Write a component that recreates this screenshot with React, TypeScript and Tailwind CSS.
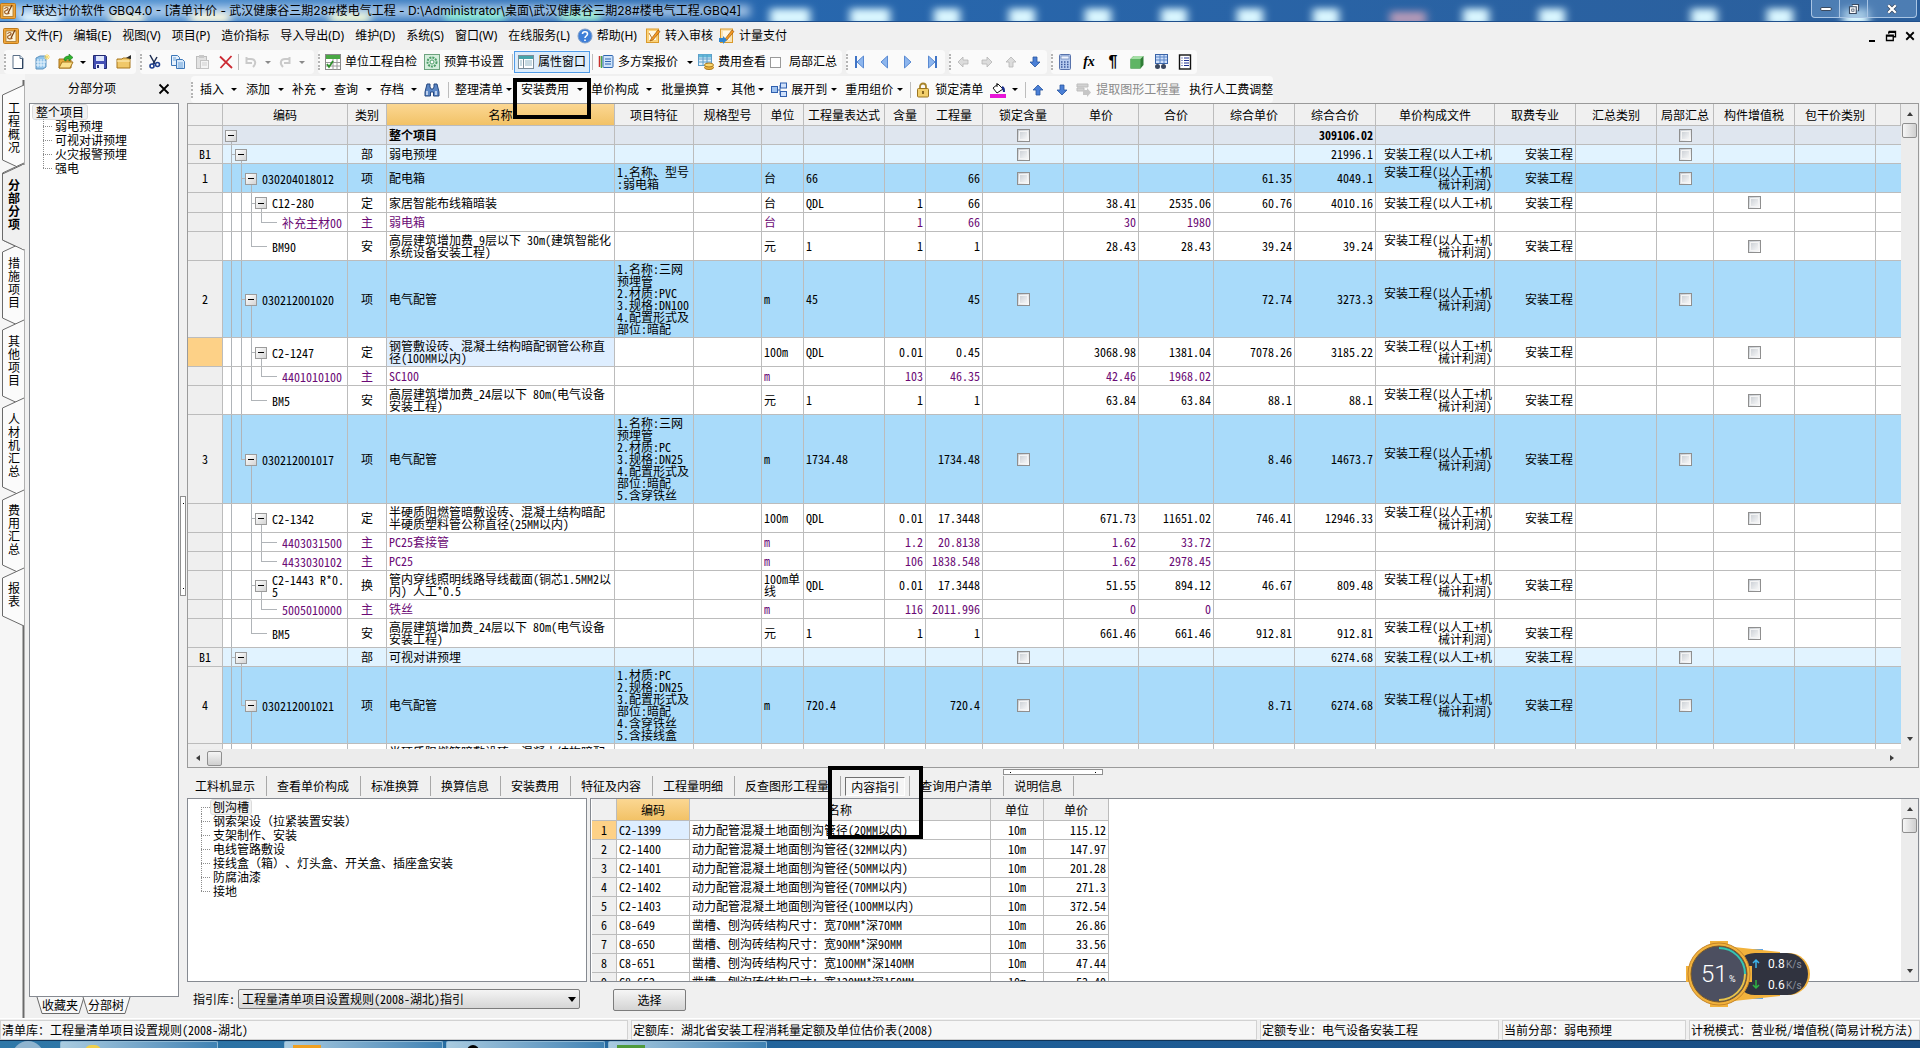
import { type ReactNode } from 'react';
import { clsx } from 'clsx';

type Kind = 'root' | 'part' | 'item' | 'norm' | 'child' | 'fee';
type Slot = 'v' | 'tee' | 'corner' | 'branch' | 'end' | 'box' | 'none';

interface BillRow {
  kind: Kind;
  height: string;
  no?: string;
  slots: Slot[];
  code?: string;
  type?: string;
  name: string;
  feature?: string;
  unit?: string;
  expr?: string;
  content?: string;
  qty?: string;
  price?: string;
  total?: string;
  unitCost?: string;
  cost?: string;
  short?: boolean;
  current?: boolean;
}

const H19 = 'h-[19px]';
const H20 = 'h-[20px]';
const H29 = 'h-[29px]';
const H77 = 'h-[77px]';
const H89 = 'h-[89px]';

const rows: BillRow[] = [
  { kind: 'root', height: H19, slots: ['box'], name: '整个项目', cost: '309106.02' },
  { kind: 'part', height: H19, no: 'B1', slots: ['tee', 'box'], type: '部', name: '弱电预埋', cost: '21996.1', short: true },
  { kind: 'item', height: H29, no: '1', slots: ['v', 'tee', 'box'], code: '030204018012', type: '项', name: '配电箱', feature: '1.名称、型号\n:弱电箱', unit: '台', expr: '66', qty: '66', unitCost: '61.35', cost: '4049.1' },
  { kind: 'norm', height: H20, slots: ['v', 'v', 'tee', 'box'], code: 'C12-280', type: '定', name: '家居智能布线箱暗装', unit: '台', expr: 'QDL', content: '1', qty: '66', price: '38.41', total: '2535.06', unitCost: '60.76', cost: '4010.16', short: true },
  { kind: 'child', height: H19, slots: ['v', 'v', 'v', 'end'], code: '补充主材00', type: '主', name: '弱电箱', unit: '台', content: '1', qty: '66', price: '30', total: '1980' },
  { kind: 'fee', height: H29, slots: ['v', 'v', 'end'], code: 'BM90', type: '安', name: '高层建筑增加费_9层以下 30m(建筑智能化\n系统设备安装工程)', unit: '元', expr: '1', content: '1', qty: '1', price: '28.43', total: '28.43', unitCost: '39.24', cost: '39.24' },
  { kind: 'item', height: H77, no: '2', slots: ['v', 'tee', 'box'], code: '030212001020', type: '项', name: '电气配管', feature: '1.名称:三网\n预埋管\n2.材质:PVC\n3.规格:DN100\n4.配置形式及\n部位:暗配', unit: 'm', expr: '45', qty: '45', unitCost: '72.74', cost: '3273.3' },
  { kind: 'norm', height: H29, slots: ['v', 'v', 'tee', 'box'], code: 'C2-1247', type: '定', name: '钢管敷设砖、混凝土结构暗配钢管公称直\n径(100MM以内)', unit: '100m', expr: 'QDL', content: '0.01', qty: '0.45', price: '3068.98', total: '1381.04', unitCost: '7078.26', cost: '3185.22', current: true },
  { kind: 'child', height: H19, slots: ['v', 'v', 'v', 'end'], code: '4401010100', type: '主', name: 'SC100', unit: 'm', content: '103', qty: '46.35', price: '42.46', total: '1968.02' },
  { kind: 'fee', height: H29, slots: ['v', 'v', 'end'], code: 'BM5', type: '安', name: '高层建筑增加费_24层以下 80m(电气设备\n安装工程)', unit: '元', expr: '1', content: '1', qty: '1', price: '63.84', total: '63.84', unitCost: '88.1', cost: '88.1' },
  { kind: 'item', height: H89, no: '3', slots: ['v', 'corner', 'box'], code: '030212001017', type: '项', name: '电气配管', feature: '1.名称:三网\n预埋管\n2.材质:PC\n3.规格:DN25\n4.配置形式及\n部位:暗配\n5.含穿铁丝', unit: 'm', expr: '1734.48', qty: '1734.48', unitCost: '8.46', cost: '14673.7' },
  { kind: 'norm', height: H29, slots: ['v', 'none', 'tee', 'box'], code: 'C2-1342', type: '定', name: '半硬质阻燃管暗敷设砖、混凝土结构暗配\n半硬质塑料管公称直径(25MM以内)', unit: '100m', expr: 'QDL', content: '0.01', qty: '17.3448', price: '671.73', total: '11651.02', unitCost: '746.41', cost: '12946.33' },
  { kind: 'child', height: H19, slots: ['v', 'none', 'v', 'branch'], code: '4403031500', type: '主', name: 'PC25套接管', unit: 'm', content: '1.2', qty: '20.8138', price: '1.62', total: '33.72' },
  { kind: 'child', height: H19, slots: ['v', 'none', 'v', 'end'], code: '4433030102', type: '主', name: 'PC25', unit: 'm', content: '106', qty: '1838.548', price: '1.62', total: '2978.45' },
  { kind: 'norm', height: H29, slots: ['v', 'none', 'tee', 'box'], code: 'C2-1443 R*0.\n5', type: '换', name: '管内穿线照明线路导线截面(铜芯1.5MM2以\n内) 人工*0.5', unit: '100m单\n线', expr: 'QDL', content: '0.01', qty: '17.3448', price: '51.55', total: '894.12', unitCost: '46.67', cost: '809.48' },
  { kind: 'child', height: H19, slots: ['v', 'none', 'v', 'end'], code: '5005010000', type: '主', name: '铁丝', unit: 'm', content: '116', qty: '2011.996', price: '0', total: '0' },
  { kind: 'fee', height: H29, slots: ['v', 'none', 'end'], code: 'BM5', type: '安', name: '高层建筑增加费_24层以下 80m(电气设备\n安装工程)', unit: '元', expr: '1', content: '1', qty: '1', price: '661.46', total: '661.46', unitCost: '912.81', cost: '912.81' },
  { kind: 'part', height: H19, no: 'B1', slots: ['tee', 'box'], type: '部', name: '可视对讲预埋', cost: '6274.68', short: true },
  { kind: 'item', height: H77, no: '4', slots: ['v', 'corner', 'box'], code: '030212001021', type: '项', name: '电气配管', feature: '1.材质:PC\n2.规格:DN25\n3.配置形式及\n部位:暗配\n4.含穿铁丝\n5.含接线盒', unit: 'm', expr: '720.4', qty: '720.4', unitCost: '8.71', cost: '6274.68' },
  { kind: 'norm', height: H29, slots: ['v', 'none', 'v'], name: '半硬质阻燃管暗敷设砖、混凝土结构暗配\n半硬质塑料管公称直径(25MM以内)' },
];

const rowColors: Record<Kind, string> = {
  root: 'bg-[#dfe6ef] font-bold',
  part: 'bg-[#e1f3ff]',
  item: 'bg-[#a9dbfa]',
  norm: 'bg-white',
  child: 'bg-white text-[#6b0a75]',
  fee: 'bg-white',
};

const columns = [
  { title: '', width: 'w-[35px]' },
  { title: '编码', width: 'w-[125px]' },
  { title: '类别', width: 'w-[39px]' },
  { title: '名称', width: 'w-[228px]' },
  { title: '项目特征', width: 'w-[79px]' },
  { title: '规格型号', width: 'w-[68px]' },
  { title: '单位', width: 'w-[42px]' },
  { title: '工程量表达式', width: 'w-[81px]' },
  { title: '含量', width: 'w-[41px]' },
  { title: '工程量', width: 'w-[57px]' },
  { title: '锁定含量', width: 'w-[81px]' },
  { title: '单价', width: 'w-[75px]' },
  { title: '合价', width: 'w-[75px]' },
  { title: '综合单价', width: 'w-[81px]' },
  { title: '综合合价', width: 'w-[81px]' },
  { title: '单价构成文件', width: 'w-[119px]' },
  { title: '取费专业', width: 'w-[81px]' },
  { title: '汇总类别', width: 'w-[81px]' },
  { title: '局部汇总', width: 'w-[57px]' },
  { title: '构件增值税', width: 'w-[81px]' },
  { title: '包干价类别', width: 'w-[81px]' },
  { title: '', width: '' },
];

const guideRows = [
  ['C2-1399', '动力配管混凝土地面刨沟管径(20MM以内)', '115.12'],
  ['C2-1400', '动力配管混凝土地面刨沟管径(32MM以内)', '147.97'],
  ['C2-1401', '动力配管混凝土地面刨沟管径(50MM以内)', '201.28'],
  ['C2-1402', '动力配管混凝土地面刨沟管径(70MM以内)', '271.3'],
  ['C2-1403', '动力配管混凝土地面刨沟管径(100MM以内)', '372.54'],
  ['C8-649', '凿槽、刨沟砖结构尺寸：宽70MM*深70MM', '26.86'],
  ['C8-650', '凿槽、刨沟砖结构尺寸：宽90MM*深90MM', '33.56'],
  ['C8-651', '凿槽、刨沟砖结构尺寸：宽100MM*深140MM', '47.44'],
  ['C8-652', '凿槽、刨沟砖结构尺寸：宽120MM*深150MM', '53.40'],
];

const sideTabs = [
  { label: '工程概况', top: 85, bottom: 170, text: 102 },
  { label: '分部分项', top: 163, bottom: 250, text: 179 },
  { label: '措施项目', top: 242, bottom: 328, text: 257 },
  { label: '其他项目', top: 320, bottom: 406, text: 335 },
  { label: '人材机汇总', top: 398, bottom: 497, text: 413 },
  { label: '费用汇总', top: 490, bottom: 575, text: 504 },
  { label: '报表', top: 568, bottom: 626, text: 582 },
];

const mono = "font-['Noto_Sans_Mono_CJK_SC','Noto_Sans_CJK_SC',monospace]";

/* ---------- icons ---------- */

function Svg({ children, size = 'size-4' }: { children: ReactNode; size?: string }) {
  return (
    <svg viewBox="0 0 16 16" className={clsx(size, 'shrink-0')} fill="none" aria-hidden="true">
      {children}
    </svg>
  );
}

const AppIcon = () => (
  <Svg>
    <rect x="0.5" y="0.5" width="15" height="15" rx="1" fill="#f0a63a" stroke="#c07a18" />
    <rect x="3" y="3" width="10" height="10.5" fill="#fdf3d8" stroke="#a5762c" strokeWidth="0.8" />
    <path d="M4.500 6c1-2 4-2 3.500 0s-3.500 1-3.500 3 3 2.500 5 1" stroke="#a0622a" strokeWidth="1.2" />
    <path d="M8 10l4-8" stroke="#7a3d0c" strokeWidth="1.2" />
  </Svg>
);
const NewIcon = () => (
  <Svg>
    <path d="M3 1.500h7l3 3v10H3z" fill="#fff" stroke="#5b7088" />
    <path d="M10 1.500v3h3" stroke="#5b7088" fill="#dfe9f5" />
    <path d="M12.500 5v9.500H4" stroke="#2f4460" />
  </Svg>
);
const ProjectIcon = () => (
  <Svg>
    <path d="M2 4l4-2h6v11l-3 2H2z" fill="#8fc3ea" stroke="#5e93bf" />
    <path d="M4 5v8M7 5v8M10 5v8M2 8h10M2 11h9" stroke="#e8f4fd" />
    <path d="M13 0v6M10 3h6M11 1l4 4M15 1l-4 4" stroke="#f9dc6e" />
  </Svg>
);
const OpenIcon = () => (
  <Svg>
    <path d="M1 5h5l1 1h6v8H1z" fill="#e7a93a" stroke="#a8761d" />
    <path d="M1 14l3-6h11l-3 6z" fill="#fbe08b" stroke="#a8761d" />
    <path d="M6 6c0-3 2-4 5-4V0l4 3.500-4 3.500V5C9 5 8 5 8 7z" fill="#2fb32f" stroke="#17751b" strokeWidth="0.6" />
  </Svg>
);
const SaveIcon = () => (
  <Svg>
    <path d="M1.500 1.500h12l1 1v12h-13z" fill="#4450b4" stroke="#22296f" />
    <rect x="4" y="2" width="8" height="5" fill="#dfe6fb" />
    <rect x="4" y="10" width="8" height="5" fill="#eef1fd" />
    <rect x="5" y="11" width="2" height="3" fill="#22296f" />
  </Svg>
);
const FolderIcon = () => (
  <Svg>
    <path d="M1 5h5l1-1h7v10H1z" fill="#f0c869" stroke="#a8761d" />
    <path d="M1 7h13" stroke="#fff2c4" />
    <path d="M10 4l5-3v4z" fill="#2c2c2c" />
  </Svg>
);
const CutIcon = () => (
  <Svg>
    <path d="M4 1l5 9M11 3L7 10" stroke="#1d2d52" strokeWidth="1.500" />
    <circle cx="6" cy="12" r="2" stroke="#1f3f8f" strokeWidth="1.600" />
    <circle cx="11.500" cy="10.500" r="2" stroke="#1f3f8f" strokeWidth="1.600" />
  </Svg>
);
const CopyIcon = () => (
  <Svg>
    <path d="M1.500 1.500h6l2 2v8h-8z" fill="#e6f1fc" stroke="#3e78b8" />
    <path d="M6.500 5.500h6l2 2v7h-8z" fill="#d4e7fa" stroke="#3e78b8" />
    <path d="M8 9h5M8 11h5M8 13h5M3 4h3M3 6h3" stroke="#6fa3d8" />
  </Svg>
);
const PasteIcon = () => (
  <Svg>
    <rect x="2.500" y="2.500" width="10" height="12" fill="#e2e2e2" stroke="#bdbdbd" />
    <rect x="5" y="1" width="5" height="3" fill="#c9c9c9" />
    <rect x="6.500" y="6.500" width="8" height="8" fill="#f4f4f4" stroke="#c4c4c4" />
    <path d="M8 9h5M8 11h5" stroke="#cfcfcf" />
  </Svg>
);
const DeleteIcon = () => (
  <Svg>
    <path d="M2 2.500l12 11.500M13.500 2L2.500 14" stroke="#cc2a33" strokeWidth="1.800" />
  </Svg>
);
const UndoIcon = ({ flip }: { flip?: boolean }) => (
  <Svg>
    <path
      d={flip ? 'M6 13C2 9 4 5 8 5h4M12.500 3v6H7' : 'M10 13c4-4 2-8-2-8H4M3.500 3v6H9'}
      stroke="#cacaca"
      strokeWidth="2"
    />
  </Svg>
);
const CheckListIcon = () => (
  <Svg>
    <rect x="0.500" y="0.500" width="15" height="15" fill="#fff" stroke="#8a8a8a" />
    <path d="M1 3h14" stroke="#4aa845" strokeWidth="4" />
    <path d="M1 8.500h14M1 12h14M8 5v11M12 5v11" stroke="#9a9a9a" />
    <path d="M2 10l2 3 4-6" stroke="#2c8f2a" strokeWidth="1.800" />
  </Svg>
);
const GearDocIcon = () => (
  <Svg>
    <rect x="0.500" y="0.500" width="15" height="15" fill="#d5eedd" stroke="#6da37e" />
    <circle cx="8" cy="8" r="4.500" stroke="#4d9e68" strokeWidth="2" strokeDasharray="2 1" />
    <circle cx="8" cy="8" r="2" fill="#fff" stroke="#4d9e68" />
  </Svg>
);
const WindowIcon = () => (
  <Svg>
    <rect x="0.500" y="1.500" width="15" height="13" fill="#fff" stroke="#7a8d99" />
    <path d="M1 3.500h14" stroke="#43a5ab" strokeWidth="3" />
    <path d="M5.500 5v9" stroke="#7a8d99" />
    <path d="M2 7h2M2 9h2M2 11h2M7 7h7M7 9h7M7 11h7" stroke="#8fb5c4" />
  </Svg>
);
const PlansIcon = () => (
  <Svg>
    <path d="M1.500 2v11" stroke="#c9302c" strokeWidth="1.500" />
    <path d="M3.500 2v12" stroke="#4aa845" strokeWidth="1.500" />
    <rect x="5" y="1.500" width="10" height="12" rx="1" fill="#cfe4fa" stroke="#2f66b1" />
    <path d="M7 5h6M7 7.500h6M7 10h6" stroke="#2f66b1" />
  </Svg>
);
const CostIcon = () => (
  <Svg>
    <rect x="0.500" y="0.500" width="13" height="11" fill="#dff0fb" stroke="#5d9cc8" />
    <path d="M1 2h12" stroke="#5fb8d8" strokeWidth="3" />
    <path d="M1 5h12M1 8h12M5 1v10M9 1v10" stroke="#5d9cc8" />
    <ellipse cx="11" cy="13.500" rx="4.500" ry="2" fill="#f0b63c" stroke="#a8761d" />
    <ellipse cx="11" cy="11" rx="4.500" ry="2" fill="#fbd76e" stroke="#a8761d" />
  </Svg>
);
const NavIcon = ({ dir, bar }: { dir: 'left' | 'right'; bar?: boolean }) => (
  <Svg>
    <g transform={dir === 'right' ? 'matrix(-1 0 0 1 16 0)' : undefined}>
      {bar && <path d="M4 2v12" stroke="#3f74c6" strokeWidth="2" />}
      <path d="M11.500 2v12L5 8z" fill="#8db6ee" stroke="#5a8ad2" />
    </g>
  </Svg>
);
const ArrowIcon = ({ rotate, color }: { rotate: number; color: string }) => (
  <Svg>
    <path
      d="M8 3l5 5h-3v5H6V8H3z"
      transform={`rotate(${rotate} 8 8)`}
      fill={color}
      stroke={color === '#4a7fd6' ? '#2a559f' : '#b5b5b5'}
      strokeWidth="0.800"
    />
  </Svg>
);
const CalcIcon = () => (
  <Svg>
    <rect x="2.500" y="0.500" width="11" height="15" rx="1" fill="#b9cdf0" stroke="#5873ac" />
    <rect x="4" y="2" width="8" height="3" fill="#eef4ff" stroke="#5873ac" strokeWidth="0.600" />
    <path d="M4 8h8M4 10.500h8M4 13h8" stroke="#3a579a" strokeWidth="1.500" strokeDasharray="1.500 1.500" />
  </Svg>
);
const CubeIcon = () => (
  <Svg>
    <path d="M1.500 5l3-3h10v9l-3 3.500h-10z" fill="#2f7d36" />
    <path d="M1.500 5h10v9.500h-10z" fill="#5fb565" />
    <path d="M1.500 5l3-3h10l-3 3z" fill="#a5dfa6" />
  </Svg>
);
const FindTableIcon = () => (
  <Svg>
    <rect x="2.500" y="0.500" width="12" height="9" fill="#cfe0fa" stroke="#3a64a8" />
    <path d="M3 3h11M3 6h11M7 1v8M11 1v8" stroke="#5b86c9" />
    <circle cx="4.500" cy="12.500" r="2.500" fill="#39465e" />
    <circle cx="10.500" cy="12.500" r="2.500" fill="#39465e" />
  </Svg>
);
const ListIcon = () => (
  <Svg>
    <rect x="2.500" y="1" width="11" height="14" fill="#fff" stroke="#111" strokeWidth="1.400" />
    <path d="M4.500 4h1M7 4h5M4.500 6.500h1M7 6.500h5M4.500 9h1M7 9h5M4.500 11.500h1M7 11.500h5" stroke="#1c2f8f" />
  </Svg>
);
const BinocularIcon = () => (
  <Svg>
    <path d="M3 2h3v3l1 2h2l1-2V2h3l2 8v4H9.500v-4h-3v4H1v-4z" fill="#5b86c4" stroke="#24467f" />
    <path d="M3 9v4M12 9v4" stroke="#dbe8fa" strokeWidth="1.500" />
  </Svg>
);
const ExpandIcon = () => (
  <Svg>
    <path d="M5 8h4M9 3v10" stroke="#3a64a8" />
    <rect x="0.500" y="4.500" width="6" height="6" fill="#9fc2f0" stroke="#2f5fae" />
    <rect x="9.500" y="1" width="6" height="5" fill="#cfe0fa" stroke="#2f5fae" />
    <rect x="9.500" y="9.500" width="6" height="5" fill="#cfe0fa" stroke="#2f5fae" />
  </Svg>
);
const LockIcon = () => (
  <Svg>
    <path d="M5 7V4.500a3 3 0 016 0V7" stroke="#a8842c" strokeWidth="1.800" />
    <rect x="2.500" y="6.500" width="11" height="8.500" rx="1" fill="#f2cf6b" stroke="#9a7420" />
    <path d="M8 9v3" stroke="#6b4d0d" strokeWidth="1.600" />
  </Svg>
);
const BucketIcon = () => (
  <Svg>
    <path d="M3 6l5-4 5 5-6 4z" fill="#fff" stroke="#111" />
    <path d="M7 5V1" stroke="#111" />
    <path d="M12 5c2 1 2 2 2 5" stroke="#1c2f8f" strokeWidth="2" />
    <rect x="0" y="12" width="16" height="4" fill="#e815d8" />
  </Svg>
);
const ExtractIcon = () => (
  <Svg>
    <path d="M1 2h11v3H1zM1 6h7v3H1z" fill="#d2d2d2" stroke="#bdbdbd" />
    <path d="M7 8h4V6l4 4.500-4 4.500v-2H7z" fill="#c6c6c6" />
  </Svg>
);
const HelpIcon = () => (
  <Svg>
    <circle cx="8" cy="8" r="7" fill="#3f7fd8" stroke="#7f9fc8" />
    <path d="M5.500 6c0-3 5-3 5 0 0 2-2.500 2-2.500 4M8 11.500V13" stroke="#fff" strokeWidth="1.600" />
  </Svg>
);
const AuditIcon = ({ arrow }: { arrow?: boolean }) => (
  <Svg>
    <rect x="1.500" y="1" width="12" height="13.500" fill={arrow ? '#fbe3b0' : '#fbd27a'} stroke="#d99a2c" />
    <rect x="4" y="3" width="7" height="9" fill="#fff8e4" />
    <path d="M6 11l7-9 2 1.500-7 8.500-3 1z" fill="#f59a22" stroke="#8a4a08" strokeWidth="0.600" />
    {arrow ? (
      <path d="M0 10h4V8l4 4-4 4v-2H0z" fill="#2f86d0" />
    ) : (
      <path d="M4 5l3 5" stroke="#c07a30" />
    )}
  </Svg>
);

/* ---------- toolbar parts ---------- */

const Grip = () => <span className="h-4 w-0 shrink-0 border-l-2 border-dotted border-[#b4b4b4]" />;
const Sep = () => <span className="h-4 w-px shrink-0 bg-[#bdbdbd]" />;

function IconButton({ label, children, className }: { label: string; children: ReactNode; className?: string }) {
  return (
    <button aria-label={label} className={clsx('flex w-6 shrink-0 justify-center', className)}>
      {children}
    </button>
  );
}

function Drop({ className = 'w-[10px]', muted }: { className?: string; muted?: boolean }) {
  return (
    <span className={clsx('flex shrink-0 justify-center', className)}>
      <span
        className={clsx(
          'border-x-[3px] border-t-[3px] border-x-transparent',
          muted ? 'border-t-[#8a8a8a]' : 'border-t-black'
        )}
      />
    </span>
  );
}

function DropButton({ label, drop = 'w-5', className }: { label: string; drop?: string; className?: string }) {
  return (
    <button className={clsx('flex shrink-0 items-center', className)}>
      {label}
      <Drop className={drop} />
    </button>
  );
}

function ToolGroup({ children, className }: { children: ReactNode; className?: string }) {
  return (
    <div className={clsx('flex h-full shrink-0 items-center rounded-sm bg-[#fafafa]', className)}>{children}</div>
  );
}

function TitleBar() {
  const blobs = [790, 870, 947, 1022, 1098, 1174, 1250, 1326, 1476, 1552, 1704, 1780, 1856];
  return (
    <header className="relative flex h-[22px] shrink-0 items-center overflow-hidden border-b border-[#1f4f8c] bg-linear-to-r from-[#5b9bd8] via-[#2767ae] via-40% to-[#2b5f9c]">
      <svg className="absolute inset-0 size-full" viewBox="0 0 1920 22" preserveAspectRatio="none" aria-hidden="true">
        <defs>
          <filter id="soft" x="-50%" y="-50%" width="200%" height="200%">
            <feGaussianBlur stdDeviation="4" />
          </filter>
        </defs>
        <g filter="url(#soft)">
          <rect x="10" y="5" width="740" height="13" fill="#c4dcf4" opacity="0.700" />
          <rect x="20" y="14" width="40" height="10" fill="#e4f6ff" />
          <rect x="110" y="14" width="34" height="10" fill="#f6f4dc" />
          <rect x="190" y="14" width="40" height="10" fill="#fffbe0" />
          <rect x="330" y="14" width="40" height="10" fill="#f4fbd8" />
          <rect x="445" y="12" width="60" height="10" fill="#8ff0d8" />
          <rect x="560" y="12" width="40" height="10" fill="#a6f4d6" />
          {blobs.map((x, i) => (
            <rect key={x} x={x - (i < 2 ? 20 : 13)} y="9" width={i < 2 ? 40 : 26} height="18" fill="#d9f6ff" />
          ))}
          <rect x="1390" y="12" width="36" height="14" fill="#b49ab8" />
        </g>
      </svg>
      <div className="relative flex flex-1 items-center gap-[5px] whitespace-nowrap">
        <AppIcon />
        <h1 className="font-['Inter','Noto_Sans_CJK_SC',sans-serif] text-xs">
          广联达计价软件 GBQ4.0 - [清单计价 - 武汉健康谷三期28#楼电气工程 - D:\Administrator\桌面\武汉健康谷三期28#楼电气工程.GBQ4]
        </h1>
      </div>
      <div className="relative mr-[3px] flex h-[18px] self-start rounded-b border border-t-0 border-[#a9c5e4] bg-[#6f9bc9]/50">
        <button aria-label="最小化" className="flex w-7 items-center justify-center border-r border-[#a9c5e4]">
          <span className="h-1 w-3 rounded-xs border border-[#3a4a60] bg-white" />
        </button>
        <button aria-label="还原" className="flex w-7 items-center justify-center border-r border-[#a9c5e4]">
          <Svg size="size-3">
            <path d="M5 2h9v9M2 5h9v9H2z" fill="#fff" stroke="#3a4a60" strokeWidth="1.500" />
            <rect x="5" y="8" width="3" height="3" fill="#fff" stroke="#3a4a60" />
          </Svg>
        </button>
        <button aria-label="关闭" className="flex w-12 items-center justify-center">
          <Svg size="size-3">
            <path d="M3 3l10 10M13 3L3 13" stroke="#3a4a60" strokeWidth="5" />
            <path d="M3 3l10 10M13 3L3 13" stroke="#fff" strokeWidth="3" />
          </Svg>
        </button>
      </div>
    </header>
  );
}

function MenuBar() {
  const menus = ['文件(F)', '编辑(E)', '视图(V)', '项目(P)', '造价指标', '导入导出(D)', '维护(D)', '系统(S)', '窗口(W)', '在线服务(L)'];
  return (
    <nav className="flex h-7 shrink-0 items-center pr-1 pl-[3px] whitespace-nowrap">
      <AppIcon />
      <div className="flex items-center gap-[11px] pl-[6px]">
        {menus.map((m) => (
          <button key={m}>{m}</button>
        ))}
      </div>
      <button className="flex items-center gap-1 pl-[7px]">
        <HelpIcon />
        帮助(H)
      </button>
      <button className="flex items-center gap-1 pl-2">
        <AuditIcon />
        转入审核
      </button>
      <button className="flex items-center gap-1 pl-[6px]">
        <AuditIcon arrow />
        计量支付
      </button>
      <div className="ml-auto flex items-center gap-[7px]">
        <button aria-label="最小化窗口" className="flex h-3 w-3 items-end justify-center">
          <span className="h-[2px] w-[6px] bg-black" />
        </button>
        <button aria-label="还原窗口">
          <Svg size="size-3">
            <path d="M5 2h9v7H11M5 2v3M5 3h9" stroke="#000" strokeWidth="1.800" />
            <path d="M2 7h9v7H2zM2 8h9" stroke="#000" strokeWidth="1.800" />
          </Svg>
        </button>
        <button aria-label="关闭窗口">
          <Svg size="size-3">
            <path d="M3 3l10 10M13 3L3 13" stroke="#000" strokeWidth="2.400" />
          </Svg>
        </button>
      </div>
    </nav>
  );
}

function MainToolbar() {
  return (
    <div className="flex h-6 shrink-0 items-center gap-1 pl-1 whitespace-nowrap">
      <ToolGroup className="w-[132px]">
        <Grip />
        <IconButton label="新建"><NewIcon /></IconButton>
        <IconButton label="新建项目"><ProjectIcon /></IconButton>
        <IconButton label="打开"><OpenIcon /></IconButton>
        <Drop />
        <IconButton label="保存"><SaveIcon /></IconButton>
        <IconButton label="关闭文件"><FolderIcon /></IconButton>
      </ToolGroup>
      <ToolGroup className="w-[174px]">
        <Grip />
        <IconButton label="剪切"><CutIcon /></IconButton>
        <IconButton label="复制"><CopyIcon /></IconButton>
        <IconButton label="粘贴"><PasteIcon /></IconButton>
        <IconButton label="删除"><DeleteIcon /></IconButton>
        <Sep />
        <IconButton label="撤销"><UndoIcon /></IconButton>
        <Drop muted />
        <IconButton label="恢复"><UndoIcon flip /></IconButton>
        <Drop muted />
      </ToolGroup>
      <ToolGroup className="w-[524px]">
        <Grip />
        <button className="flex items-center gap-1 pl-[5px]"><CheckListIcon />单位工程自检</button>
        <button className="flex items-center gap-1 pl-[7px]"><GearDocIcon />预算书设置</button>
        <span className="w-2" />
        <Sep />
        <button className="ml-px flex h-[22px] items-center gap-1 border border-[#4f9be8] bg-[#dcecfb] px-[3px]">
          <WindowIcon />属性窗口
        </button>
        <span className="w-[2px]" />
        <Sep />
        <button className="flex items-center gap-1 pl-[5px]"><PlansIcon />多方案报价<Drop className="w-4" /></button>
        <button className="flex items-center gap-1"><CostIcon />费用查看</button>
        <label className="flex items-center gap-2 pl-1">
          <input type="checkbox" className="size-[11px] appearance-none border border-[#9a9a9a] bg-white" />
          局部汇总
        </label>
      </ToolGroup>
      <ToolGroup className="w-[99px]">
        <Grip />
        <IconButton label="首条"><NavIcon dir="left" bar /></IconButton>
        <IconButton label="上一条"><NavIcon dir="left" /></IconButton>
        <IconButton label="下一条"><NavIcon dir="right" /></IconButton>
        <IconButton label="末条"><NavIcon dir="right" bar /></IconButton>
      </ToolGroup>
      <ToolGroup className="w-[98px]">
        <Grip />
        <IconButton label="左移"><ArrowIcon rotate={-90} color="#dcdcdc" /></IconButton>
        <IconButton label="右移"><ArrowIcon rotate={90} color="#dcdcdc" /></IconButton>
        <IconButton label="上移"><ArrowIcon rotate={0} color="#dcdcdc" /></IconButton>
        <IconButton label="下移"><ArrowIcon rotate={180} color="#4a7fd6" /></IconButton>
      </ToolGroup>
      <ToolGroup>
        <Grip />
        <IconButton label="计算器"><CalcIcon /></IconButton>
        <IconButton label="函数">
          <i className="font-['Liberation_Serif','Noto_Sans_CJK_SC',serif] text-sm leading-4 font-bold">fx</i>
        </IconButton>
        <IconButton label="段落">
          <span className="font-['Liberation_Sans','Noto_Sans_CJK_SC',sans-serif] text-base leading-4 font-bold">¶</span>
        </IconButton>
        <IconButton label="图块"><CubeIcon /></IconButton>
        <IconButton label="查找表"><FindTableIcon /></IconButton>
        <IconButton label="清单"><ListIcon /></IconButton>
      </ToolGroup>
    </div>
  );
}

function BillToolbar() {
  return (
    <div className="relative flex h-[29px] shrink-0 items-center pt-[2px] pl-1 whitespace-nowrap">
      <ToolGroup>
        <Grip />
        <DropButton label="插入" className="ml-[7px]" />
        <DropButton label="添加" drop="w-[22px]" className="ml-[2px]" />
        <DropButton label="补充" drop="w-[14px]" />
        <DropButton label="查询" drop="w-[22px]" className="ml-1" />
        <DropButton label="存档" drop="w-[20px]" />
        <IconButton label="查找" className="mx-[-4px]"><BinocularIcon /></IconButton>
        <span className="w-[8px]" />
        <Sep />
        <DropButton label="整理清单" drop="w-[12px]" className="ml-[6px]" />
        <DropButton label="安装费用" drop="w-[22px]" className="ml-[6px]" />
        <DropButton label="单价构成" drop="w-[20px]" />
        <DropButton label="批量换算" drop="w-[20px]" className="ml-[2px]" />
        <DropButton label="其他" drop="w-[12px]" className="ml-[2px]" />
        <button className="flex items-center gap-1 pl-1">
          <ExpandIcon />
          展开到
          <Drop className="w-[6px]" />
        </button>
        <DropButton label="重用组价" drop="w-[14px]" className="ml-2" />
        <span className="w-[3px]" />
        <Sep />
        <button className="flex items-center gap-1 pl-1">
          <LockIcon />
          锁定清单
        </button>
        <IconButton label="填充色" className="ml-[3px]"><BucketIcon /></IconButton>
        <Drop />
        <span className="w-[5px]" />
        <Sep />
        <IconButton label="上移行"><ArrowIcon rotate={0} color="#4a7fd6" /></IconButton>
        <IconButton label="下移行"><ArrowIcon rotate={180} color="#4a7fd6" /></IconButton>
        <button disabled className="flex items-center gap-1 pl-[2px] text-[#8a8a8a]">
          <ExtractIcon />
          提取图形工程量
        </button>
        <button className="pl-[9px]">执行人工费调整</button>
      </ToolGroup>
      <span className="pointer-events-none absolute top-1 left-[326px] z-10 h-[41px] w-[78px] border-4 border-black" />
    </div>
  );
}

/* ---------- side tabs ---------- */

function SideTabs() {
  return (
    <nav className="relative w-[25px] shrink-0 bg-[#f6f6f6]">
      <svg className="absolute inset-0 h-full w-[25px]" aria-hidden="true">
        <g transform="translate(0 -74)">
          <path d="M23.500 80V1018" stroke="#6a6a6a" strokeWidth="2" />
          {sideTabs.map((t) => (
            <path
              key={t.label}
              d={`M24 ${t.top}L2.500 ${t.top + 10}V${t.bottom - 10}L24 ${t.bottom}`}
              fill={t.label === '分部分项' ? '#f0f0f0' : '#fbfbfb'}
              stroke="#6a6a6a"
            />
          ))}
          <path d="M24 164L2.500 174V240L24 250" fill="#f0f0f0" stroke="#6a6a6a" />
          <path d="M23.500 165V249" stroke="#f0f0f0" strokeWidth="3" />
        </g>
      </svg>
      {sideTabs.map((t) => (
        <button
          key={t.label}
          style={{ top: t.text - 74 }}
          className={clsx('absolute left-2 w-3 text-xs leading-[13px]', t.label === '分部分项' && 'font-bold')}
        >
          {t.label}
        </button>
      ))}
    </nav>
  );
}

function DottedTree({ items, selected }: { items: string[]; selected?: number }) {
  return (
    <ul className="w-fit">
      {items.map((item, i) => (
        <li key={item} className="flex h-[14px] items-center whitespace-nowrap">
          <svg className="h-[14px] w-[10px] shrink-0" aria-hidden="true">
            <path
              d={`M0.500 ${i === 0 && selected === 0 ? 7 : 0}V${i === items.length - 1 ? 7 : 14}M0 7.500H9`}
              stroke="#8c8c8c"
              strokeDasharray="1 1"
            />
          </svg>
          <button
            className={clsx(
              'h-[14px] px-[2px] leading-[14px]',
              i === selected && 'rounded-xs bg-[#f1f1f1] outline-1 outline-[#dcdcdc]'
            )}
          >
            {item}
          </button>
        </li>
      ))}
    </ul>
  );
}

function PartPanel() {
  return (
    <aside className="ml-1 flex w-[150px] shrink-0 flex-col">
      <div className="flex h-[29px] items-center justify-center pl-[30px]">
        <h2>分部分项</h2>
        <button aria-label="关闭面板" className="ml-[42px]">
          <Svg size="size-3">
            <path d="M2 2l12 12M14 2L2 14" stroke="#000" strokeWidth="2.400" />
          </Svg>
        </button>
      </div>
      <div className={clsx('flex flex-1 flex-col items-start border border-[#868a91] bg-white pt-px pl-[3px]', mono)}>
        <button className="h-[14px] rounded-xs bg-[#f1f1f1] px-[3px] leading-[14px] outline-1 outline-[#dcdcdc]">
          整个项目
        </button>
        <div className="pl-[10px]">
          <DottedTree items={['弱电预埋', '可视对讲预埋', '火灾报警预埋', '强电']} />
        </div>
      </div>
      <div className="flex h-[21px] pl-2">
        {['收藏夹', '分部树'].map((t) => (
          <button key={t} className="relative h-[17px] w-[46px] leading-[17px]">
            <svg className="absolute inset-0 h-[17px] w-[50px] overflow-visible" aria-hidden="true">
              <path d="M0 0l5 16.500h37L47 0" stroke="#6a6a6a" fill="#f8f8f8" />
            </svg>
            <span className="relative">{t}</span>
          </button>
        ))}
      </div>
    </aside>
  );
}

/* ---------- bill grid ---------- */

function SlotMark({ slot }: { slot: Slot }) {
  const down = slot === 'v' || slot === 'tee' || slot === 'branch' || slot === 'box';
  const mark = (
    <span className="flex h-full w-[10px] flex-col items-center">
      <span className={clsx('w-px flex-1', slot !== 'box' && slot !== 'none' && 'bg-[#b0b4b8]')} />
      {slot === 'box' ? (
        <span className="flex size-3 shrink-0 items-center justify-center border border-[#9b9b9b] bg-linear-to-br from-white to-[#d4d4d4]">
          <span className="h-px w-[6px] bg-black" />
        </span>
      ) : (
        <span className="flex h-px w-[10px] shrink-0">
          <span className="w-[5px] shrink-0" />
          <span
            className={clsx(
              'h-px shrink-0',
              slot === 'v' && 'w-px bg-[#b0b4b8]',
              (slot === 'tee' || slot === 'corner') && 'w-[5px] bg-[#b0b4b8]',
              (slot === 'end' || slot === 'branch') && 'w-[16px] bg-[#b0b4b8]'
            )}
          />
        </span>
      )}
      <span className={clsx('w-px flex-1', down && 'bg-[#b0b4b8]')} />
    </span>
  );
  if (slot !== 'box') return mark;
  return (
    <button aria-label="折叠" className="h-full w-[10px]">
      {mark}
    </button>
  );
}

function GridCheck({ label }: { label: string }) {
  return (
    <input
      type="checkbox"
      aria-label={label}
      className="mx-auto block size-[13px] appearance-none border border-[#8f8f8f] bg-linear-to-br from-[#c4c9cf] to-white outline-1 -outline-offset-3 outline-[#f4f4f4]"
    />
  );
}

const cell = 'overflow-hidden border-r border-b border-[#bcbcbc] p-0';

function Cell({ children, className }: { children?: ReactNode; className?: string }) {
  return <td className={clsx(cell, 'px-[2px] whitespace-pre', className)}>{children}</td>;
}

function BillLine({ row }: { row: BillRow }) {
  const group = row.kind === 'root' || row.kind === 'part' || row.kind === 'item';
  const priced = row.type !== undefined && row.kind !== 'child';
  const leaf = row.kind === 'child' || row.kind === 'fee';
  const taxed = priced && !group;
  return (
    <tr className={clsx(row.height, rowColors[row.kind])}>
      <th className={clsx(cell, 'text-center font-normal', row.current ? 'bg-[#fdd187]' : 'bg-[#efefef]')}>{row.no}</th>
      <td className={cell}>
        <div className={clsx('-mb-px flex items-center pl-[3px]', row.height)}>
          {row.slots.map((s, i) => (
            <SlotMark key={i} slot={s} />
          ))}
          <span className={clsx('whitespace-pre', leaf ? 'pl-[16px]' : 'pl-[6px]')}>{row.code}</span>
        </div>
      </td>
      <Cell className="text-center">{row.type}</Cell>
      <Cell className={clsx(row.current && 'bg-[#deeeff]')}>{row.name}</Cell>
      <Cell>{row.feature}</Cell>
      <Cell />
      <Cell>{row.unit}</Cell>
      <Cell>{row.expr}</Cell>
      <Cell className="text-right">{row.content}</Cell>
      <Cell className="text-right">{row.qty}</Cell>
      <Cell>{group && <GridCheck label="锁定含量" />}</Cell>
      <Cell className="text-right">{row.price}</Cell>
      <Cell className="text-right">{row.total}</Cell>
      <Cell className="text-right">{row.unitCost}</Cell>
      <Cell className="text-right">{row.cost}</Cell>
      <Cell className="text-right">
        {priced && (row.short ? '安装工程(以人工+机' : '安装工程(以人工+机\n械计利润)')}
      </Cell>
      <Cell className="text-right">{priced && '安装工程'}</Cell>
      <Cell />
      <Cell>{group && <GridCheck label="局部汇总" />}</Cell>
      <Cell>{taxed && <GridCheck label="构件增值税" />}</Cell>
      <Cell />
      <Cell className="border-r-0" />
    </tr>
  );
}

function VScroll() {
  return (
    <div className="flex w-[17px] shrink-0 flex-col items-center bg-[#ececec] py-2">
      <span className="border-x-[3px] border-b-[4px] border-x-transparent border-b-[#3c3c3c]" />
      <span className="mt-[7px] h-[15px] w-[15px] rounded-xs border border-[#8f8f8f] bg-linear-to-r from-[#f6f6f6] to-[#cfcfcf]" />
      <span className="mt-auto border-x-[3px] border-t-[4px] border-x-transparent border-t-[#3c3c3c]" />
    </div>
  );
}

function BillGrid() {
  return (
    <section className="flex min-h-0 flex-1 flex-col border border-[#9a9a9a] bg-white">
      <div className="flex min-h-0 flex-1">
        <div className="min-w-0 flex-1 overflow-hidden">
          <table className={clsx('w-full table-fixed border-separate border-spacing-0 leading-3', mono)}>
            <colgroup>
              {columns.map((c, i) => (
                <col key={i} className={c.width} />
              ))}
            </colgroup>
            <thead>
              <tr className="h-[22px]">
                {columns.map((c, i) => (
                  <th
                    key={i}
                    className={clsx(
                      cell,
                      'font-normal whitespace-nowrap',
                      c.title === '名称' ? 'bg-linear-to-b from-[#fbd792] to-[#f2c266]' : 'bg-[#f0f0f0]'
                    )}
                  >
                    {c.title}
                  </th>
                ))}
              </tr>
            </thead>
            <tbody>
              {rows.map((row, i) => (
                <BillLine key={i} row={row} />
              ))}
            </tbody>
          </table>
        </div>
        <VScroll />
      </div>
      <div className="flex h-[18px] shrink-0 items-center bg-[#ececec] pr-[24px] pl-2">
        <span className="border-y-[3px] border-r-[4px] border-y-transparent border-r-[#3c3c3c]" />
        <span className="ml-[7px] h-[15px] w-[15px] rounded-xs border border-[#8f8f8f] bg-linear-to-b from-[#f6f6f6] to-[#cfcfcf]" />
        <span className="ml-auto border-y-[3px] border-l-[4px] border-y-transparent border-l-[#3c3c3c]" />
      </div>
    </section>
  );
}

/* ---------- lower panel ---------- */

const lowerTabs = ['工料机显示', '查看单价构成', '标准换算', '换算信息', '安装费用', '特征及内容', '工程量明细', '反查图形工程量', '内容指引', '查询用户清单', '说明信息'];

function LowerTabs() {
  return (
    <div className={clsx('relative flex h-[30px] shrink-0 items-center pt-[6px] whitespace-nowrap', mono)}>
      {lowerTabs.map((t) => {
        const active = t === '内容指引';
        return (
          <div
            key={t}
            className={clsx(
              'flex h-5 items-center border-r border-[#a8a8a8]',
              t === '工料机显示' ? 'pr-[11px] pl-2' : active ? 'px-1' : 'pr-[11px] pl-[10px]'
            )}
          >
            <button
              className={clsx(
                active &&
                  'border border-t-[#6f6f6f] border-r-white border-b-white border-l-[#6f6f6f] bg-[#f6f6f6] px-[5px] leading-[17px]'
              )}
            >
              {t}
            </button>
          </div>
        );
      })}
      <span className="absolute top-px left-[816px] flex h-[6px] w-[100px] items-center justify-between border border-[#8f8f8f] bg-white px-[6px]">
        <i className="size-px bg-black" />
        <i className="size-px bg-black" />
      </span>
      <span className="pointer-events-none absolute top-[-2px] left-[641px] z-10 h-[73px] w-[95px] border-4 border-black" />
    </div>
  );
}

function GuideTable() {
  const td = 'border-r border-b border-[#bcbcbc] px-[2px] py-0';
  return (
    <div className="min-w-0 flex-1 overflow-hidden pl-px">
      <table className={clsx('table-fixed border-separate border-spacing-0 leading-3 whitespace-nowrap', mono)}>
        <thead>
          <tr className="h-[22px] bg-[#f0f0f0]">
            <th className={clsx(td, 'w-[25px]')} />
            <th className={clsx(td, 'w-[73px] bg-linear-to-b from-[#fbd792] to-[#f2c266] font-normal')}>编码</th>
            <th className={clsx(td, 'w-[301px] font-normal')}>名称</th>
            <th className={clsx(td, 'w-[53px] font-normal')}>单位</th>
            <th className={clsx(td, 'w-[65px] font-normal')}>单价</th>
          </tr>
        </thead>
        <tbody>
          {guideRows.map(([code, name, price], i) => (
            <tr key={code} className="h-[19px]">
              <th className={clsx(td, 'font-normal', i === 0 ? 'bg-[#fdd187]' : 'bg-[#efefef]')}>{i + 1}</th>
              <td className={clsx(td, i === 0 && 'bg-[#deeeff]')}>{code}</td>
              <td className={td}>{name}</td>
              <td className={clsx(td, 'text-center')}>10m</td>
              <td className={clsx(td, 'text-right')}>{price}</td>
            </tr>
          ))}
        </tbody>
      </table>
    </div>
  );
}

function LowerPanel() {
  return (
    <section className={clsx('flex h-[250px] shrink-0 flex-col', mono)}>
      <LowerTabs />
      <div className="flex h-[184px] shrink-0">
        <div className="w-[400px] shrink-0 border border-[#868a91] bg-white pt-px pl-[13px]">
          <DottedTree
            selected={0}
            items={['刨沟槽', '钢索架设（拉紧装置安装）', '支架制作、安装', '电线管路敷设', '接线盒（箱）、灯头盒、开关盒、插座盒安装', '防腐油漆', '接地']}
          />
        </div>
        <div className="ml-[3px] flex min-w-0 flex-1 overflow-hidden border border-[#868a91] bg-white">
          <GuideTable />
          <VScroll />
        </div>
      </div>
      <div className="flex items-start pt-[7px] pl-[6px]">
        <label htmlFor="guide-lib" className="leading-5">指引库:</label>
        <span className="relative ml-[3px] w-[342px]">
          <select
            id="guide-lib"
            className="h-[20px] w-full appearance-none rounded-xs border border-[#7c7c7c] bg-linear-to-b from-[#f4f4f4] to-[#d6d6d6] px-[3px] leading-[18px]"
          >
            <option>工程量清单项目设置规则(2008-湖北)指引</option>
          </select>
          <span className="pointer-events-none absolute top-2 right-1 border-x-[4px] border-t-[5px] border-x-transparent border-t-black" />
        </span>
        <button className="ml-[33px] h-[22px] w-[73px] rounded-xs border border-[#7c7c7c] bg-linear-to-b from-[#f6f6f6] to-[#d4d4d4]">
          选择
        </button>
      </div>
    </section>
  );
}

function StatusBar() {
  const box = 'flex h-5 items-center border border-[#d2d2d2] bg-[#f6f6f6] px-px';
  return (
    <footer className={clsx('flex h-[22px] shrink-0 items-center gap-[3px] border-t border-white bg-[#f0f0f0] whitespace-pre', mono)}>
      <div className={clsx(box, 'w-[628px]')}>清单库：工程量清单项目设置规则(2008-湖北)</div>
      <div className={clsx(box, 'flex-1')}>定额库：湖北省安装工程消耗量定额及单位估价表(2008)</div>
      <div className={clsx(box, 'w-[239px]')}>定额专业：电气设备安装工程</div>
      <div className={clsx(box, 'w-[184px]')}>当前分部：弱电预埋</div>
      <div className={clsx(box, 'w-[231px]')}>计税模式：营业税/增值税(简易计税方法)</div>
    </footer>
  );
}

function Taskbar() {
  const task = 'h-full rounded-t-xs border border-b-0 border-[#8fb9d4] bg-linear-to-r from-[#a9cbe0] to-[#3f82b3] pt-[3px]';
  return (
    <div className="flex h-2 shrink-0 overflow-hidden border-t border-[#0f3458] bg-linear-to-r from-[#2f78a8] via-[#1f5f98] to-[#174a80]">
      <span className="ml-3 h-8 w-8 rounded-full bg-[#8fb4cf]" />
      <span className={clsx(task, 'ml-4 w-[158px] pl-6')}>
        <i className="block h-3 w-4 rounded-full bg-[#f0cf4a]" />
      </span>
      <span className={clsx(task, 'ml-[66px] w-[159px] pl-2')}>
        <i className="block h-3 w-7 bg-[#f0a020]" />
      </span>
      <span className={clsx(task, 'ml-[3px] w-[159px] pl-5')}>
        <i className="block h-3 w-3 rounded-full bg-black" />
      </span>
      <span className={clsx(task, 'ml-[3px] w-[159px] pl-2')}>
        <i className="block h-3 w-7 bg-[#4f9a3a]" />
      </span>
    </div>
  );
}

function SpeedWidget() {
  return (
    <svg
      className="absolute right-[108px] bottom-[38px] h-[72px] w-[128px]"
      viewBox="0 0 128 72"
      fontFamily="Roboto, 'Noto Sans CJK SC', sans-serif"
    >
      <path d="M58 11h21v8H58zM58 53h21v8H58z" fill="#5aa2e8" />
      <path d="M50 9l46 5v5H50zM50 63l46-5v-5H50z" fill="#f2b23c" />
      <rect x="52" y="15" width="74" height="42" rx="21" fill="#f2b23c" />
      <rect x="50" y="15" width="74" height="42" rx="21" fill="#30333f" />
      <path d="M26 3h18v66H26zM2 28h66v16H2z" fill="#f2b23c" />
      <circle cx="35" cy="36" r="31" fill="#f2b23c" stroke="#c4852a" />
      <circle cx="35" cy="36" r="28" fill="#4c4f60" stroke="#7a5a2a" />
      <path d="M35 10a26 26 0 0126 26" stroke="#35c6b0" strokeWidth="2" fill="none" />
      <path d="M61 36a26 26 0 01-26 26" stroke="#e8c34a" strokeWidth="2" fill="none" />
      <text x="17" y="44" fontSize="24" fontWeight="300" fill="#fff">51</text>
      <text x="45" y="44" fontSize="9" fill="#fff">%</text>
      <path d="M72 30v-8M69 25l3-3 3 3" stroke="#3db4ea" strokeWidth="1.500" fill="none" />
      <path d="M72 42v8M69 47l3 3 3-3" stroke="#2fb344" strokeWidth="1.500" fill="none" />
      <text x="84" y="30" fontSize="12" fill="#fff">0.8</text>
      <text x="102" y="30" fontSize="10" fill="#8f93a0">K/s</text>
      <text x="84" y="51" fontSize="12" fill="#fff">0.6</text>
      <text x="102" y="51" fontSize="10" fill="#8f93a0">K/s</text>
    </svg>
  );
}

export default function App() {
  return (
    <div className="relative flex h-screen flex-col overflow-hidden bg-[#f0f0f0] font-['Noto_Sans','Noto_Sans_CJK_SC',sans-serif] text-xs text-black [text-spacing-trim:space-all]">
      <TitleBar />
      <MenuBar />
      <MainToolbar />
      <main className="flex min-h-0 flex-1 pr-px">
        <SideTabs />
        <PartPanel />
        <div className="flex w-2 shrink-0 items-center justify-center">
          <span className="flex h-[100px] w-[6px] flex-col items-center justify-between border border-[#8f8f8f] bg-white py-[6px]">
            <i className="size-px bg-black" />
            <i className="size-px bg-black" />
          </span>
        </div>
        <div className="flex min-w-0 flex-1 flex-col">
          <BillToolbar />
          <BillGrid />
          <LowerPanel />
        </div>
      </main>
      <StatusBar />
      <Taskbar />
      <SpeedWidget />
    </div>
  );
}
